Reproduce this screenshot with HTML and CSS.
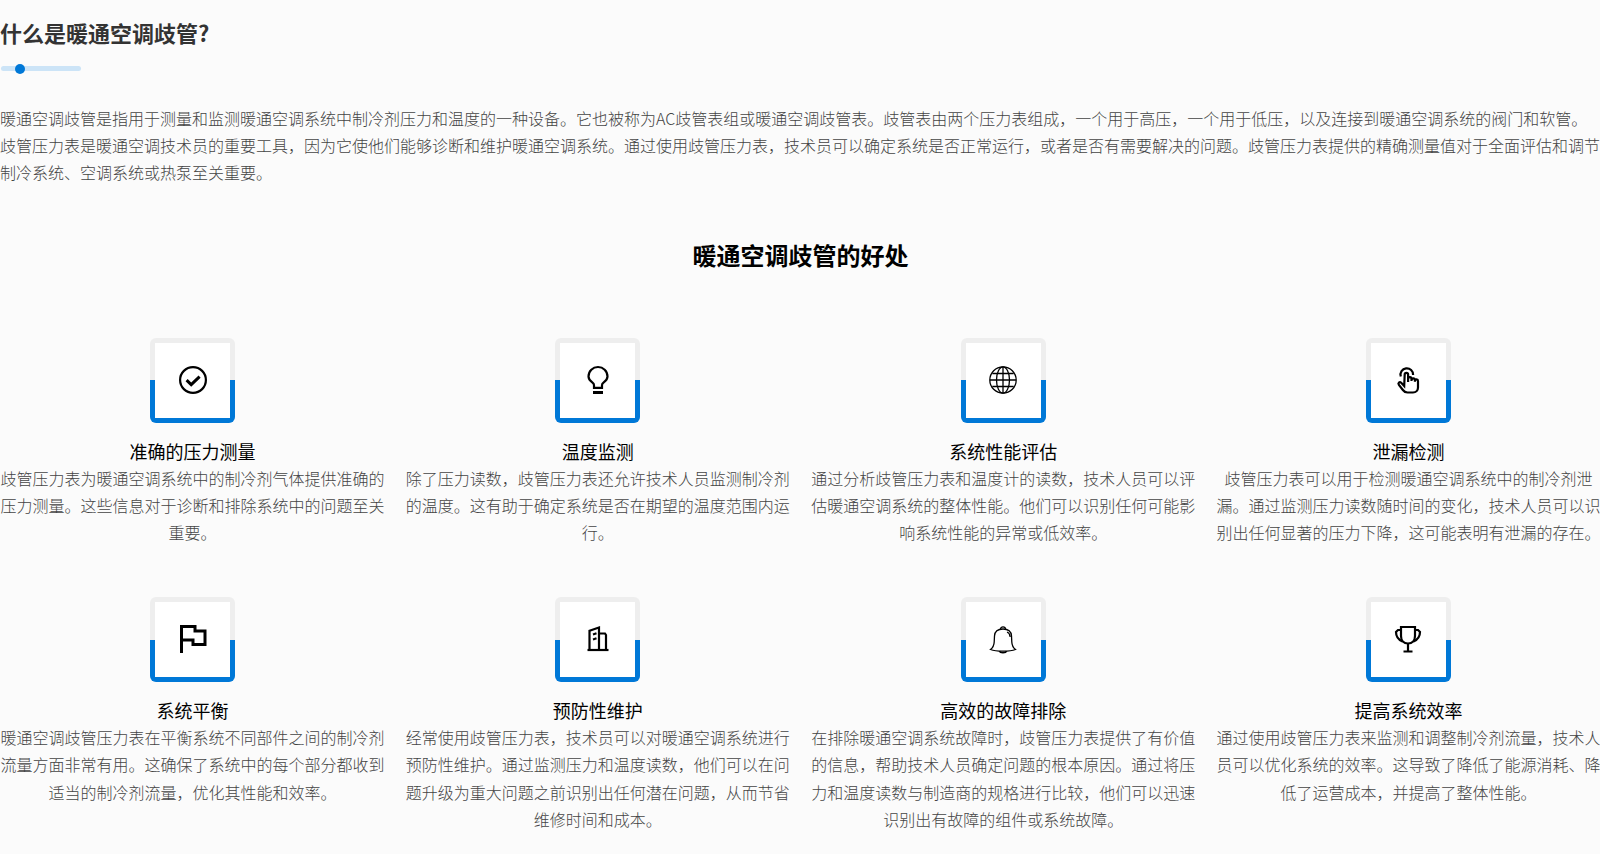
FILE: index.html
```html
<!DOCTYPE html>
<html lang="zh">
<head>
<meta charset="utf-8">
<title>暖通空调歧管</title>
<link rel="stylesheet" href="styles.css">
</head>
<body>
<main class="page">
  <h3 class="title">什么是暖通空调歧管?</h3>
  <div class="divider"><span class="dot"></span></div>
  <p class="intro">暖通空调歧管是指用于测量和监测暖通空调系统中制冷剂压力和温度的一种设备。它也被称为AC歧管表组或暖通空调歧管表。歧管表由两个压力表组成，一个用于高压，一个用于低压，以及连接到暖通空调系统的阀门和软管。歧管压力表是暖通空调技术员的重要工具，因为它使他们能够诊断和维护暖通空调系统。通过使用歧管压力表，技术员可以确定系统是否正常运行，或者是否有需要解决的问题。歧管压力表提供的精确测量值对于全面评估和调节制冷系统、空调系统或热泵至关重要。</p>
  <h2 class="subtitle">暖通空调歧管的好处</h2>
  <section class="grid">
    <article class="item">
      <div class="box"><div class="box-inner">
        <svg class="icon" viewBox="0 0 28 28"><circle cx="14" cy="14" r="12.900" class="s2"/><path d="M7.600 14.200l4.600 4.400 8.400-8" class="s3"/></svg>
      </div></div>
      <h4 class="item-title">准确的压力测量</h4>
      <p class="item-text">歧管压力表为暖通空调系统中的制冷剂气体提供准确的压力测量。这些信息对于诊断和排除系统中的问题至关重要。</p>
    </article>
    <article class="item">
      <div class="box"><div class="box-inner">
        <svg class="icon" viewBox="0 0 28 28"><path d="M10 21.800v-2.600c0-1.200-.6-1.900-1.500-2.600C6 14.800 4.500 13 4.500 10.500 4.500 5 8.800 1 14 1s9.500 4 9.500 9.500c0 2.500-1.500 4.300-4 6.100-.9.700-1.500 1.400-1.500 2.600v2.600z" class="s2"/><path d="M9 26.500h10" class="s3"/></svg>
      </div></div>
      <h4 class="item-title">温度监测</h4>
      <p class="item-text">除了压力读数，歧管压力表还允许技术人员监测制冷剂的温度。这有助于确定系统是否在期望的温度范围内运行。</p>
    </article>
    <article class="item">
      <div class="box"><div class="box-inner">
        <svg class="icon" viewBox="0 0 28 28"><circle cx="14" cy="14" r="13.200" class="s1"/><ellipse cx="14" cy="14" rx="6.500" ry="13.200" class="s1"/><path d="M14 1v26M1 14h26M3.300 7.500h21.400M3.300 20.500h21.400" class="s1"/></svg>
      </div></div>
      <h4 class="item-title">系统性能评估</h4>
      <p class="item-text">通过分析歧管压力表和温度计的读数，技术人员可以评估暖通空调系统的整体性能。他们可以识别任何可能影响系统性能的异常或低效率。</p>
    </article>
    <article class="item">
      <div class="box"><div class="box-inner">
        <svg class="icon" viewBox="0 0 28 28"><g transform="translate(1 0)"><path d="M5.800 10.500a6.300 6.300 0 1 1 12.300-1.500" class="s2"/><path d="M9.200 20l-3-3.200c-1.600-1.500-3.600.3-2.300 2l4 5.200c1 1.400 2.400 2.500 4.600 2.500h5.500c3 0 5-2.300 5-5v-6.500c0-2-2.800-2.200-3.100-.2v1-1.800c0-2-3.200-2.200-3.400-.1v1.200-2.300c0-2-3.200-2.200-3.400-.1V16V8.500c0-2.200-3.400-2.200-3.400 0z" class="s2"/></g></svg>
      </div></div>
      <h4 class="item-title">泄漏检测</h4>
      <p class="item-text">歧管压力表可以用于检测暖通空调系统中的制冷剂泄漏。通过监测压力读数随时间的变化，技术人员可以识别出任何显著的压力下降，这可能表明有泄漏的存在。</p>
    </article>
    <article class="item">
      <div class="box"><div class="box-inner">
        <svg class="icon" viewBox="0 0 28 28"><path d="M2.500 28V1.500h13.500v4.500h10v13.500H14v-4.500H2.500" class="s3"/></svg>
      </div></div>
      <h4 class="item-title">系统平衡</h4>
      <p class="item-text">暖通空调歧管压力表在平衡系统不同部件之间的制冷剂流量方面非常有用。这确保了系统中的每个部分都收到适当的制冷剂流量，优化其性能和效率。</p>
    </article>
    <article class="item">
      <div class="box"><div class="box-inner">
        <svg class="icon" viewBox="0 0 28 28"><path d="M3.500 25h21" class="s2"/><path d="M5.500 25V5.800L15 2.500V25M15 8.500h6l1 1.500v15" class="s2"/><path d="M9 9.500l3.500-1.200M9 14.500l3.500-1.200" class="s2"/></svg>
      </div></div>
      <h4 class="item-title">预防性维护</h4>
      <p class="item-text">经常使用歧管压力表，技术员可以对暖通空调系统进行预防性维护。通过监测压力和温度读数，他们可以在问题升级为重大问题之前识别出任何潜在问题，从而节省维修时间和成本。</p>
    </article>
    <article class="item">
      <div class="box"><div class="box-inner">
        <svg class="icon" viewBox="0 0 28 28"><path d="M1.500 24.500c2.500-1.800 3.500-3.500 3.700-7.500l.3-6c.3-4.500 3.500-7 8.500-7s8.200 2.500 8.500 7l.3 6c.2 4 1.200 5.700 3.700 7.500-3 1.200-7.500 1.700-12.500 1.700s-9.500-.5-12.500-1.700z" class="s1"/><path d="M11.500 4.300c0-3.300 5-3.300 5 0M10.500 26c.5 2.300 6.500 2.300 7 0M18 7c2.500 1 3 3 3.200 5" class="s1"/></svg>
      </div></div>
      <h4 class="item-title">高效的故障排除</h4>
      <p class="item-text">在排除暖通空调系统故障时，歧管压力表提供了有价值的信息，帮助技术人员确定问题的根本原因。通过将压力和温度读数与制造商的规格进行比较，他们可以迅速识别出有故障的组件或系统故障。</p>
    </article>
    <article class="item">
      <div class="box"><div class="box-inner">
        <svg class="icon" viewBox="0 0 28 28"><path d="M7 2h14v9c0 4.800-2.800 7.500-7 7.500S7 15.800 7 11z" class="s2"/><path d="M7 5H4L2 7c0 4.500 3 8 6.500 9.500M21 5h3l2 2c0 4.500-3 8-6.500 9.500M14 18.500V26M9.500 26.500h9" class="s2"/></svg>
      </div></div>
      <h4 class="item-title">提高系统效率</h4>
      <p class="item-text">通过使用歧管压力表来监测和调整制冷剂流量，技术人员可以优化系统的效率。这导致了降低了能源消耗、降低了运营成本，并提高了整体性能。</p>
    </article>
  </section>
</main>
</body>
</html>
```

FILE: styles.css
```css
* { box-sizing: border-box; }
html, body { margin: 0; padding: 0; }
body {
  height: 854px;
  overflow: hidden;
  background: #fbfbfb;
  font-family: "Noto Sans CJK SC", "Noto Sans", sans-serif;
}
.page { width: 1601px; }
.title {
  margin: 0;
  padding-top: 15px;
  font-size: 22px;
  line-height: 34px;
  font-weight: 700;
  color: #333;
}
.divider {
  position: relative;
  width: 80px;
  height: 5px;
  margin: 17px 0 0 1px;
  border-radius: 3px;
  background: #cce4f7;
}
.dot {
  position: absolute;
  left: 14px;
  top: -2px;
  width: 10px;
  height: 10px;
  border-radius: 50%;
  background: #0078d7;
}
.intro {
  margin: 34px 0 0;
  font-size: 16px;
  line-height: 27px;
  font-weight: 300;
  color: #444;
}
.subtitle {
  margin: 52px 0 0;
  font-size: 24px;
  line-height: 34px;
  font-weight: 700;
  color: #000;
  text-align: center;
}
.grid {
  display: grid;
  grid-template-columns: repeat(4, 385px);
  column-gap: 20.33px;
  row-gap: 50.6px;
  margin-top: 66px;
}
.item { text-align: center; }
.box {
  width: 85px;
  height: 85px;
  margin: 0 auto;
  padding: 5px;
  border-radius: 6px;
  background: linear-gradient(#eee 42px, #0078d7 42px);
}
.item:nth-child(n+5) .box {
  background: linear-gradient(#eee 43px, #0078d7 43px);
}
.box-inner {
  display: flex;
  align-items: center;
  justify-content: center;
  width: 75px;
  height: 75px;
  background: #fff;
}
.icon {
  width: 28px;
  height: 28px;
  margin-bottom: 1px;
  overflow: visible;
}
.s1, .s2, .s3 { fill: none; stroke: #000; }
.s1 { stroke-width: 1.300; }
.s2 { stroke-width: 2.200; }
.s3 { stroke-width: 3; }
.item-title {
  margin: 15px 0 0;
  font-size: 18px;
  line-height: 27px;
  font-weight: 400;
  color: #000;
}
.item-text {
  margin: 0;
  font-size: 16px;
  line-height: 27.2px;
  font-weight: 300;
  color: #444;
}
```
